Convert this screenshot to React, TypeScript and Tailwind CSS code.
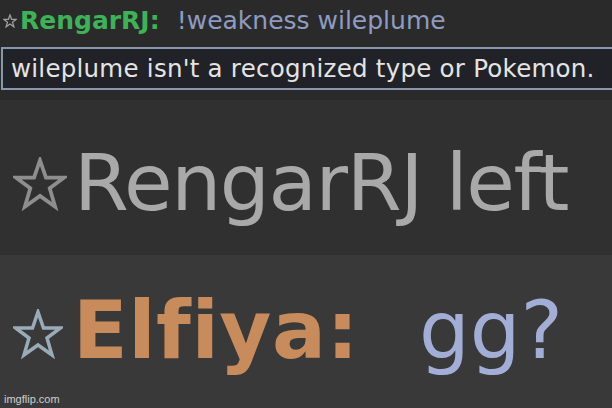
import React from "react";

function Star({ size, color, stroke }: { size: number; color: string; stroke: number }) {
  return (
    <svg width={size} height={size} viewBox="0 0 100 100" className="shrink-0">
      <polygon
        points="50,6 61,38 95,38 68,58 78,92 50,72 22,92 32,58 5,38 39,38"
        fill="none"
        stroke={color}
        strokeWidth={stroke}
        strokeLinejoin="miter"
      />
    </svg>
  );
}

export default function App() {
  const font = { fontFamily: '"DejaVu Sans", Verdana, sans-serif' };
  return (
    <div
      className="w-[612px] h-[408px] overflow-hidden flex flex-col bg-[#2b2b2b] [font-variant-ligatures:none]"
      style={font}
    >
      {/* top chat snippet */}
      <div className="h-[100px] flex flex-col bg-[#2a2a2a]">
        <div className="flex items-end pt-[8px] pl-[3px] text-[25px] leading-none">
          <div className="mb-[5px] mr-[3px]">
            <Star size={14} color="#a0a0a0" stroke={9} />
          </div>
          <span className="font-bold text-[#3db257]">RengarRJ:</span>
          <span className="ml-[17px] text-[#8e9bc2]">!weakness wileplume</span>
        </div>
        <div className="mt-[14px] ml-[1px] h-[43px] border-2 border-r-0 border-[#8797ae] bg-[#202227] pl-[8px] pt-[8px] text-[24.5px] leading-none text-[#e4e4e4] tracking-[0.25px] whitespace-nowrap">
          wileplume isn't a recognized type or Pokemon.
        </div>
      </div>

      {/* RengarRJ left */}
      <div className="h-[155px] bg-[#303030] flex items-start pt-[44px] pl-[13px]">
        <div className="flex items-end blur-[0.6px]">
          <div className="mb-[12px] mr-[7px]">
            <Star size={54} color="#8e8e8e" stroke={7} />
          </div>
          <span className="text-[79px] leading-none text-[#a9a9a9] tracking-[-1.4px] whitespace-nowrap">
            RengarRJ left
          </span>
        </div>
      </div>

      {/* Elfiya: gg? */}
      <div className="relative flex-1 bg-[#393939] flex items-start pt-[36px] pl-[13px]">
        <div className="flex items-end blur-[0.6px]">
          <div className="mb-[12px] mr-[10px]">
            <Star size={50} color="#9aabb8" stroke={7} />
          </div>
          <span className="text-[80px] leading-none font-bold text-[#c78b5c] tracking-[0.5px] whitespace-nowrap">
            Elfiya:
          </span>
          <span className="ml-[60px] text-[80px] leading-none text-[#a2aed6] whitespace-nowrap">
            gg?
          </span>
        </div>
        <div
          className="absolute left-[4px] bottom-[3px] text-[11px] leading-none text-[#d0d0d0]"
          style={{ fontFamily: '"Liberation Sans", Arial, sans-serif' }}
        >
          imgflip.com
        </div>
      </div>
    </div>
  );
}
